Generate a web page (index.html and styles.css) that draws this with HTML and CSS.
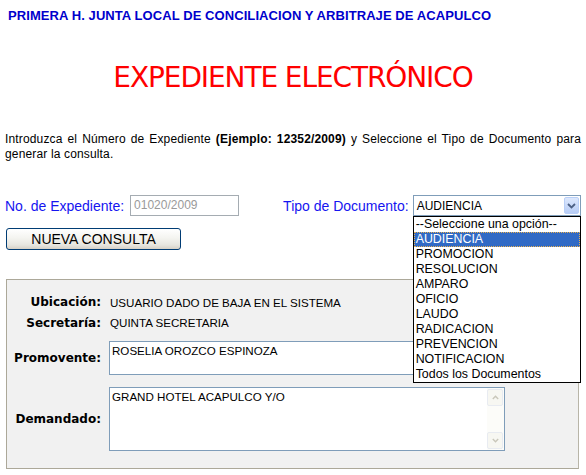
FILE: index.html
```html
<!DOCTYPE html>
<html lang="es">
<head>
<meta charset="utf-8">
<title>Expediente Electrónico</title>
<link rel="stylesheet" href="styles.css">
</head>
<body>
<h1 class="org">PRIMERA H. JUNTA LOCAL DE CONCILIACION Y ARBITRAJE DE ACAPULCO</h1>
<h2 class="title">EXPEDIENTE ELECTRÓNICO</h2>
<p class="intro"><span>Introduzca el Número de Expediente</span> <b>(Ejemplo: 12352/2009)</b> <span>y Seleccione el Tipo de Documento para</span> <span>generar la consulta.</span></p>
<div class="form-row">
  <span class="lbl">No. de Expediente:</span>
  <div class="input">01020/2009</div>
  <span class="lbl lbl-tipo">Tipo de Documento:</span>
  <div class="select">
    <span class="select-value">AUDIENCIA</span>
    <span class="select-btn"><svg width="9" height="6" viewBox="0 0 9 6"><path d="M1 1 L4.5 4.5 L8 1" fill="none" stroke="#4d6185" stroke-width="1.8"/></svg></span>
    <ul class="dropdown">
      <li>--Seleccione una opción--</li>
      <li class="sel">AUDIENCIA</li>
      <li>PROMOCION</li>
      <li>RESOLUCION</li>
      <li>AMPARO</li>
      <li>OFICIO</li>
      <li>LAUDO</li>
      <li>RADICACION</li>
      <li>PREVENCION</li>
      <li>NOTIFICACION</li>
      <li>Todos los Documentos</li>
    </ul>
  </div>
</div>
<div class="btn-row"><button class="btn">NUEVA CONSULTA</button></div>
<section class="panel">
  <div class="f-label r1">Ubicación:</div>
  <div class="f-value r1">USUARIO DADO DE BAJA EN EL SISTEMA</div>
  <div class="f-label r2">Secretaría:</div>
  <div class="f-value r2">QUINTA SECRETARIA</div>
  <div class="f-label r3">Promovente:</div>
  <div class="tarea tarea-sm r3"><div class="tarea-text">ROSELIA OROZCO ESPINOZA</div></div>
  <div class="f-label r4">Demandado:</div>
  <div class="tarea tarea-lg r4">
    <div class="tarea-text">GRAND HOTEL ACAPULCO Y/O</div>
    <div class="sbar">
      <span class="sbtn"><svg width="7" height="5" viewBox="0 0 7 5"><path d="M0.8 4 L3.5 1.2 L6.2 4" fill="none" stroke="#c9c7ba" stroke-width="1.4"/></svg></span>
      <span class="strack"></span>
      <span class="sbtn"><svg width="7" height="5" viewBox="0 0 7 5"><path d="M0.8 1 L3.5 3.8 L6.2 1" fill="none" stroke="#c9c7ba" stroke-width="1.4"/></svg></span>
    </div>
  </div>
</section>
</body>
</html>
```
FILE: styles.css
```css
* { box-sizing: border-box; }
html, body { margin: 0; padding: 0; background: #fff; }
body {
  font-family: "Liberation Sans", Arial, sans-serif;
  color: #000;
  width: 586px;
}
.org {
  margin: 0;
  padding: 8px 8px 0;
  font-size: 13px;
  line-height: 16px;
  letter-spacing: 0.08px;
  font-weight: bold;
  color: #0000cc;
}
.title {
  margin: 37px 0 0;
  text-align: center;
  font-family: "DejaVu Sans", sans-serif;
  font-weight: normal;
  font-size: 28px;
  line-height: 34px;
  letter-spacing: -1.1px;
  color: #ff0000;
}
.intro {
  margin: 37px 0 0;
  padding: 0 5px;
  font-size: 12px;
  letter-spacing: 0.15px;
  line-height: 15px;
  text-align: justify;
}
.form-row {
  margin-top: 33px;
  height: 21px;
  display: flex;
  align-items: center;
  padding-left: 5px;
}
.lbl {
  font-size: 14px;
  color: #1515f0;
  white-space: nowrap;
}
.input {
  margin-left: 6px;
  width: 109px;
  height: 21px;
  border: 1px solid #a5acb2;
  background: #fff;
  color: #9a9a9a;
  font-size: 12px;
  line-height: 19px;
  padding-left: 3px;
}
.lbl-tipo { margin-left: 44px; }
.select {
  position: relative;
  margin-left: 4px;
  width: 168px;
  height: 21px;
  border: 1px solid #7f9db9;
  background: #fff;
  display: flex;
  align-items: center;
  justify-content: space-between;
  padding: 0 1px 0 3px;
}
.select-value { font-size: 12px; }
.select-btn {
  width: 15px;
  height: 17px;
  border: 1px solid #b9cff7;
  border-radius: 2px;
  background: linear-gradient(#dde8fd, #b7cdf6);
  display: flex;
  align-items: center;
  justify-content: center;
}
.dropdown {
  position: absolute;
  top: 20px;
  left: -1px;
  width: 168px;
  margin: 0;
  padding: 0;
  list-style: none;
  background: #fff;
  border: 1px solid #000;
  z-index: 5;
}
.dropdown li {
  height: 15px;
  line-height: 15px;
  font-size: 12.4px;
  padding-left: 2px;
  white-space: nowrap;
}
.dropdown li.sel {
  background: #316ac5;
  color: #fff;
  outline: 1px dotted #e8b050;
  outline-offset: -1px;
}
.btn-row {
  margin-top: 12px;
  padding-left: 6px;
  height: 22px;
}
.btn {
  width: 175px;
  height: 22px;
  margin: 0;
  padding: 0;
  border: 1px solid #003c74;
  border-radius: 3px;
  background: linear-gradient(#ffffff 0%, #f4f4f0 45%, #e6e5df 80%, #d6d0c5 100%);
  font-family: "Liberation Sans", Arial, sans-serif;
  font-size: 14px;
  color: #000;
  line-height: 20px;
}
.panel {
  margin: 29px 0 0 6px;
  width: 573px;
  height: 190px;
  border: 1px solid #aca899;
  border-right-color: #b8b5a8;
  background: #f1f1f1;
  display: grid;
  grid-template-columns: 97px 396px;
  grid-template-rows: 20px 21px 8px 34px 12px 64px;
  column-gap: 5px;
  padding-top: 12px;
  align-items: center;
}
.f-label {
  font-family: "DejaVu Sans", sans-serif;
  font-weight: bold;
  font-size: 12px;
  text-align: right;
  padding-right: 3px;
  white-space: nowrap;
}
.f-value {
  font-size: 11.6px;
  padding-left: 1px;
  white-space: nowrap;
}
.r1 { grid-row: 1; }
.r2 { grid-row: 2; }
.r3 { grid-row: 4; }
.r4 { grid-row: 6; }
.tarea {
  border: 1px solid #7f9db9;
  background: #fff;
  display: flex;
}
.tarea-sm { height: 34px; }
.tarea-lg { height: 64px; }
.tarea-text {
  flex: 1;
  font-size: 11.6px;
  line-height: 14px;
  padding: 2px 2px;
}
.sbar {
  width: 17px;
  display: flex;
  flex-direction: column;
  padding: 1px 1px 1px 0;
  background: #fcfcf9;
}
.sbtn {
  height: 17px;
  border: 1px solid #e8ebf1;
  border-radius: 2px;
  background: #f7f7f2;
  display: flex;
  align-items: center;
  justify-content: center;
}
.strack { flex: 1; }
```
